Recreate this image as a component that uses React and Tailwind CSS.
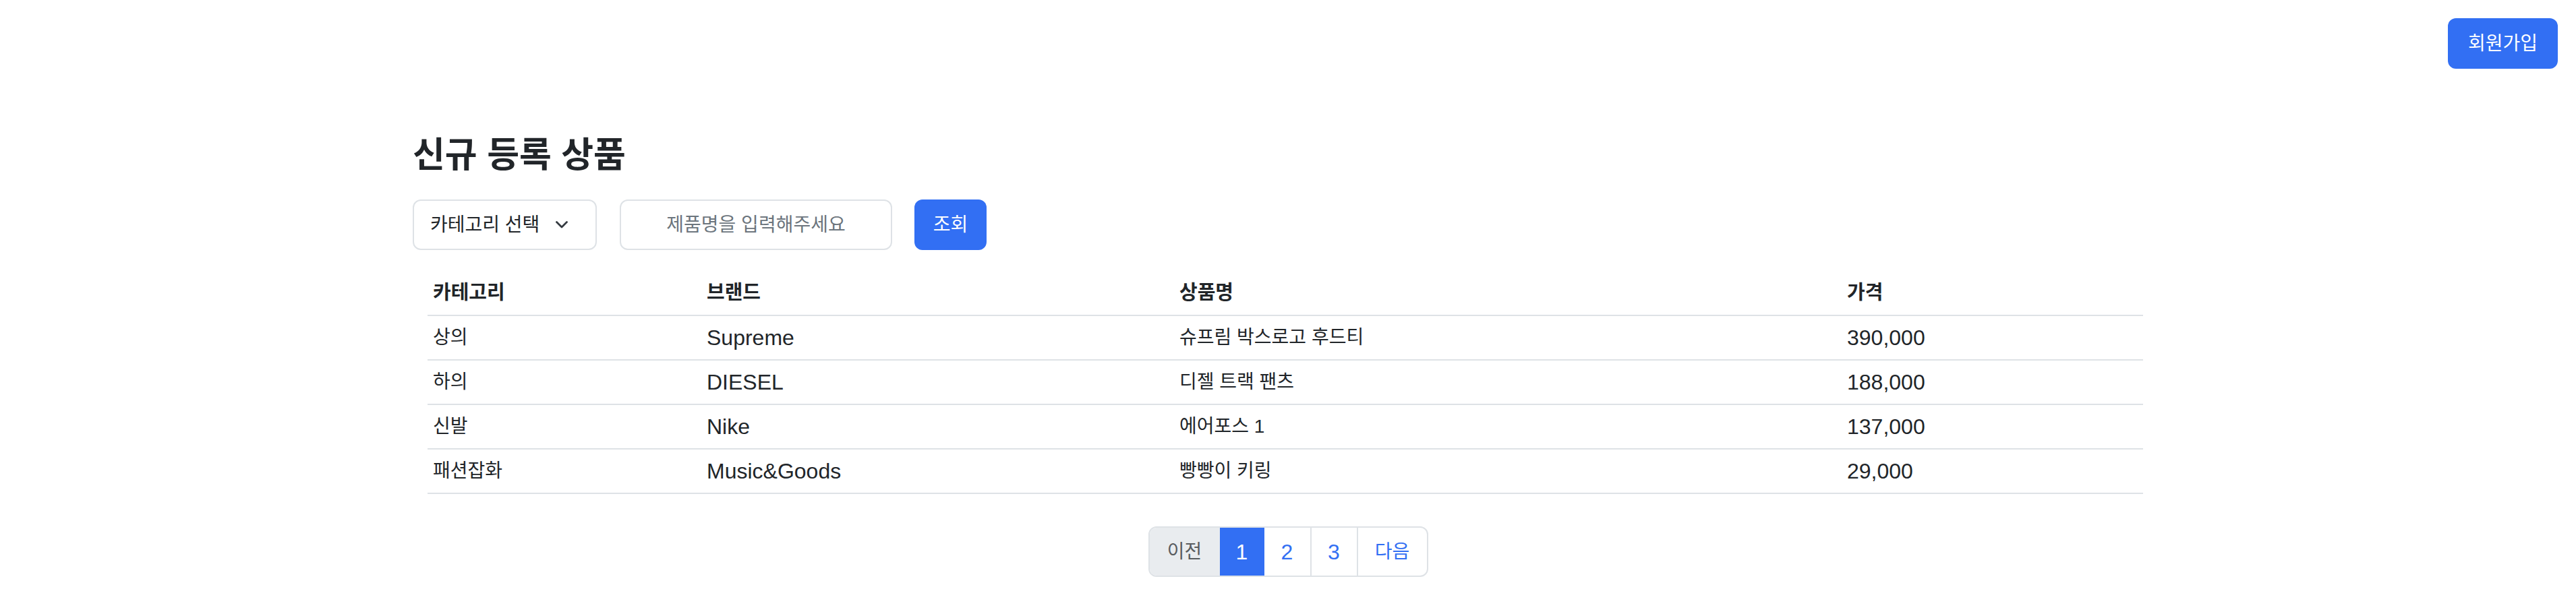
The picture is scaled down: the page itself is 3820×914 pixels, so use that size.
import React from "react";

const rows = [
  { cat: "상의", brand: "Supreme", name: "슈프림 박스로고 후드티", price: "390,000" },
  { cat: "하의", brand: "DIESEL", name: "디젤 트랙 팬츠", price: "188,000" },
  { cat: "신발", brand: "Nike", name: "에어포스 1", price: "137,000" },
  { cat: "패션잡화", brand: "Music&Goods", name: "빵빵이 키링", price: "29,000" },
];

export default function App() {
  return (
    <div className="min-h-screen bg-white text-[#212529] font-['Liberation_Sans','Noto_Sans_CJK_KR',sans-serif]">
      <div className="flex justify-end pt-[27px] pr-[27px]">
        <button className="h-[75px] w-[163px] rounded-[12px] bg-[#326ff3] text-[28px] text-white">
          회원가입
        </button>
      </div>

      <div className="mx-auto w-[2596px]">
        <h1 className="mt-[98px] h-[60px] text-[52px] font-bold leading-[60px]">신규 등록 상품</h1>

        <div className="mt-[36px] flex items-center">
          <div className="flex h-[75px] w-[273px] items-center rounded-[12px] border-2 border-[#dee2e6] pl-[24px] text-[28px]">
            <span>카테고리 선택</span>
            <svg className="ml-[24px]" width="18" height="11" viewBox="0 0 18 11" fill="none">
              <path d="M1.5 1.5 L9 9 L16.5 1.5" stroke="#343a40" strokeWidth="2.8" strokeLinecap="round" strokeLinejoin="round" />
            </svg>
          </div>
          <input
            className="ml-[34px] h-[75px] w-[404px] rounded-[12px] border-2 border-[#dee2e6] text-center text-[28px] outline-none placeholder:text-[#6c757d]"
            placeholder="제품명을 입력해주세요"
          />
          <button className="ml-[33px] h-[75px] w-[107px] rounded-[12px] bg-[#326ff3] text-[28px] text-white">
            조회
          </button>
        </div>

        <table className="ml-[22px] mt-[31px] w-[2544px] border-collapse">
          <thead>
            <tr className="border-b-2 border-[#dee2e6]">
              <th className="h-[66px] w-[406px] pl-[8px] text-left align-middle text-[29px] font-bold">카테고리</th>
              <th className="w-[701px] pl-[8px] text-left align-middle text-[29px] font-bold">브랜드</th>
              <th className="w-[990px] pl-[8px] text-left align-middle text-[29px] font-bold">상품명</th>
              <th className="pl-[8px] text-left align-middle text-[29px] font-bold">가격</th>
            </tr>
          </thead>
          <tbody>
            {rows.map((r) => (
              <tr key={r.brand} className="border-b-2 border-[#dee2e6]">
                <td className="h-[66px] pl-[8px] align-middle text-[28px]">{r.cat}</td>
                <td className="pl-[8px] align-middle text-[32px]">{r.brand}</td>
                <td className="pl-[8px] align-middle text-[28px]">{r.name}</td>
                <td className="pl-[8px] align-middle text-[32px]">{r.price}</td>
              </tr>
            ))}
          </tbody>
        </table>

        <div className="mt-[48px] flex justify-center">
          <div className="flex h-[75px] overflow-hidden rounded-[12px] border-2 border-[#dee2e6]">
            <div className="flex w-[104px] items-center justify-center bg-[#e9ecef] text-[28px] text-[#595c5f]">이전</div>
            <div className="flex w-[66px] items-center justify-center bg-[#326ff3] text-[32px] text-white">1</div>
            <div className="flex w-[68px] items-center justify-center text-[32px] text-[#326ff3]">2</div>
            <div className="flex w-[69px] items-center justify-center border-l-2 border-[#dee2e6] text-[32px] text-[#326ff3]">3</div>
            <div className="flex w-[104px] items-center justify-center border-l-2 border-[#dee2e6] text-[28px] text-[#326ff3]">다음</div>
          </div>
        </div>
      </div>
    </div>
  );
}
